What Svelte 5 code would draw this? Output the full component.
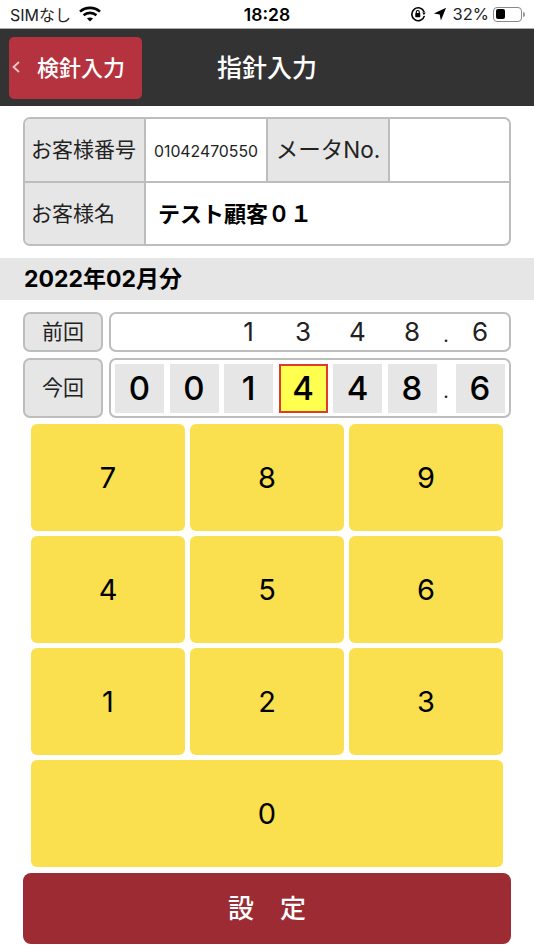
<script>
	const keyRows = [["7", "8", "9"], ["4", "5", "6"], ["1", "2", "3"]];
	const prev = ["1", "3", "4", "8"];
	const digits = ["0", "0", "1", "4", "4", "8"];
	let active = 3;
</script>

<div class="page">
	<div class="status">
		<div class="st-left">
			<span>SIMなし</span>
			<svg class="wifi" width="22" height="16" viewBox="0 0 22 16">
				<path d="M1 5.6C6.6.6 15.4.6 21 5.6" fill="none" stroke="#000" stroke-width="2.6" />
				<path d="M4.6 9.2c3.6-3.1 9.2-3.1 12.8 0" fill="none" stroke="#000" stroke-width="2.6" />
				<path d="M8 12.4c1.8-1.2 4.2-1.2 6 0l-3 3.2z" fill="#000" />
			</svg>
		</div>
		<div class="st-time">18:28</div>
		<div class="st-right">
			<svg width="16" height="16" viewBox="0 0 14 14">
				<path d="M12.4 5.2A5.6 5.6 0 1 0 12.6 8.6" fill="none" stroke="#000" stroke-width="1.4" />
				<path d="M10.6 5.6h3.2l-1.6 2.2z" fill="#000" />
				<rect x="4.6" y="6.2" width="4.4" height="3.6" rx=".6" fill="#000" />
				<path d="M5.5 6.4V5.2a1.3 1.3 0 0 1 2.6 0v1.2" fill="none" stroke="#000" stroke-width="1" />
			</svg>
			<svg class="arrow" width="14" height="14" viewBox="0 0 13 14">
				<path d="M12.6.8 7.4 13.4 6.2 7.4.4 6.4z" fill="#000" />
			</svg>
			<span class="pct">32%</span>
			<div class="battery"><div class="level"></div></div>
			<div class="nub"></div>
		</div>
	</div>

	<header>
		<button class="back">
			<svg class="chev" width="8" height="12" viewBox="0 0 8 12">
				<path d="M7 1 1.5 6 7 11" fill="none" stroke="#eec9cc" stroke-width="1.8" />
			</svg>
			<span class="cjk">検針入力</span>
		</button>
		<h1>指針入力</h1>
	</header>

	<div class="info">
		<div class="row">
			<div class="lbl first"><span class="cjk">お客様番号</span></div>
			<div class="val num">01042470550</div>
			<div class="lbl second"><span class="cjk">メータNo.</span></div>
			<div class="val"></div>
		</div>
		<div class="row">
			<div class="lbl first"><span class="cjk">お客様名</span></div>
			<div class="val name"><span class="cjk">テスト顧客０１</span></div>
		</div>
	</div>

	<div class="month"><span class="cjk">2022年02月分</span></div>

	<div class="meter prev-row">
		<button class="tag"><span class="cjk">前回</span></button>
		<div class="display">
			<span class="cell"></span>
			<span class="cell"></span>
			{#each prev as d}
				<span class="cell">{d}</span>
			{/each}
			<span class="dot">.</span>
			<span class="cell">6</span>
		</div>
	</div>

	<div class="meter cur-row">
		<button class="tag"><span class="cjk">今回</span></button>
		<div class="display">
			{#each digits as d, i}
				<span class="cell box" class:active={i === active}>{d}</span>
			{/each}
			<span class="dot">.</span>
			<span class="cell box">6</span>
		</div>
	</div>

	<div class="keypad">
		{#each keyRows as row}
			{#each row as k}
				<button class="key">{k}</button>
			{/each}
		{/each}
		<button class="key zero">0</button>
	</div>

	<button class="set"><span class="cjk">設　定</span></button>
</div>

<style>
	:global(body) {
		margin: 0;
		background: #fff;
	}
	.page {
		width: 534px;
		height: 950px;
		overflow: hidden;
		background: #fff;
		font-family: Inter, "Noto Sans CJK JP", sans-serif;
		color: #000;
		display: flex;
		flex-direction: column;
	}
	button {
		font-family: inherit;
		border: none;
		padding: 0;
		color: inherit;
	}
	/* the CJK glyphs sit low in their line box, this brings them back to centre */
	.cjk {
		display: block;
		margin-top: -4px;
	}
	.status {
		height: 28px;
		display: grid;
		grid-template-columns: 1fr auto 1fr;
		align-items: center;
		padding: 0 10px;
		font-size: 16px;
		border-bottom: 1px solid #aaa;
	}
	.st-left {
		display: flex;
		align-items: center;
		gap: 8px;
		color: #222;
	}
	.st-time {
		font-weight: 600;
		font-size: 17.5px;
	}
	.st-right {
		display: flex;
		align-items: center;
		justify-content: flex-end;
		margin-right: -1px;
		color: #222;
	}
	.arrow {
		margin-left: 7px;
	}
	.pct {
		margin-left: 6px;
		font-size: 16.5px;
	}
	.battery {
		margin-left: 4px;
		width: 29px;
		height: 15px;
		box-sizing: border-box;
		border: 1px solid #888;
		border-radius: 4px;
		padding: 1.5px;
	}
	.level {
		width: 9px;
		height: 100%;
		background: #000;
		border-radius: 2px;
	}
	.nub {
		width: 2px;
		height: 5px;
		margin-left: 1px;
		background: #999;
		border-radius: 0 2px 2px 0;
	}
	header {
		height: 77px;
		background: #333;
		display: flex;
		align-items: center;
		padding-left: 9px;
		flex-shrink: 0;
	}
	.back {
		width: 133px;
		height: 62px;
		background: #b5333e;
		border-radius: 5px;
		color: #fff;
		font-size: 22px;
		font-weight: 500;
		display: flex;
		align-items: center;
		padding-left: 3px;
	}
	.chev {
		margin-right: 17px;
		margin-top: -2px;
	}
	h1 {
		margin: -4px 0 0 75px;
		color: #fff;
		font-size: 25px;
		font-weight: 500;
	}
	.info {
		margin: 11px 23px 0;
		height: 129px;
		box-sizing: border-box;
		border: 2px solid #bdbdbd;
		border-radius: 7px;
		overflow: hidden;
		flex-shrink: 0;
	}
	.row {
		display: flex;
		height: 62px;
	}
	.row + .row {
		height: 63px;
		border-top: 2px solid #bdbdbd;
		box-sizing: border-box;
	}
	.lbl {
		background: #e6e6e6;
		font-size: 21px;
		color: #222;
		display: flex;
		align-items: center;
		border-right: 2px solid #bdbdbd;
		box-sizing: border-box;
	}
	.first {
		width: 121px;
		padding-left: 6px;
	}
	.second {
		width: 124px;
		font-size: 22.5px;
		justify-content: center;
		border-left: 2px solid #bdbdbd;
	}
	.val {
		flex: 1;
		display: flex;
		align-items: center;
	}
	.num {
		flex: 0 0 120px;
		justify-content: center;
		font-size: 15.8px;
		color: #222;
		padding-top: 2px;
		box-sizing: border-box;
	}
	.name {
		padding-left: 12px;
		font-size: 22px;
		font-weight: 700;
	}
	.month {
		margin-top: 12px;
		height: 42px;
		background: #e6e6e6;
		display: flex;
		align-items: center;
		padding-left: 24px;
		font-size: 23px;
		font-weight: 700;
		flex-shrink: 0;
	}
	.meter {
		display: flex;
		gap: 6px;
		margin: 0 23px;
		flex-shrink: 0;
	}
	.prev-row {
		margin-top: 12px;
		height: 40px;
	}
	.cur-row {
		margin-top: 6px;
		height: 60px;
	}
	.tag {
		width: 80px;
		background: #e6e6e6;
		border: 2px solid #bdbdbd;
		border-radius: 7px;
		font-size: 21px;
		color: #222;
		box-sizing: border-box;
	}
	.display {
		flex: 1;
		border: 2px solid #bdbdbd;
		border-radius: 7px;
		display: flex;
		align-items: center;
		box-sizing: border-box;
		padding: 0 4px;
		gap: 5.5px;
	}
	.cell {
		width: 49px;
		text-align: center;
		font-size: 26px;
		line-height: 32px;
		color: #222;
	}
	.dot {
		width: 8px;
		text-align: center;
		font-size: 19px;
		margin-top: 6px;
		color: #222;
	}
	.box {
		height: 49px;
		line-height: 49px;
		background: #e6e6e6;
		font-size: 33px;
		font-weight: 500;
		color: #000;
		box-sizing: border-box;
	}
	.active {
		background: #ffff4f;
		border: 2px solid #e03a2c;
		line-height: 45px;
	}
	.keypad {
		margin: 6px 31px 0;
		display: grid;
		grid-template-columns: repeat(3, 154px);
		grid-auto-rows: 106.5px;
		column-gap: 5px;
		row-gap: 5.5px;
		flex-shrink: 0;
	}
	.key {
		background: #fae04f;
		border-radius: 6px;
		font-size: 29px;
		color: #000;
	}
	.zero {
		grid-column: 1 / -1;
	}
	.set {
		margin: 6px 23px 0;
		height: 71px;
		background: #9c2b34;
		border-radius: 8px;
		color: #fff;
		font-size: 26px;
		font-weight: 500;
		flex-shrink: 0;
	}
</style>
